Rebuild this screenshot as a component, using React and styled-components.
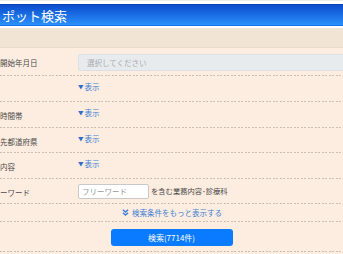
import React from "react";
import styled, { createGlobalStyle } from "styled-components";

const Global = createGlobalStyle`
  html, body { margin: 0; padding: 0; background: #ffffff; }
  body { font-family: "Noto Sans CJK JP", "Noto Sans", sans-serif; }
`

const rows = [
    { label: '開始年月日', kind: 'select', h: 28 },
    { label: '', kind: 'toggle', h: 26 },
    { label: '時間帯', kind: 'toggle', h: 26 },
    { label: '先都道府県', kind: 'toggle', h: 25 },
    { label: '内容', kind: 'toggle', h: 26 },
    { label: 'ーワード', kind: 'keyword', h: 25 },
]

// dashed rule under each row, finer than a css dashed border
const dashRule = `
    background-image: repeating-linear-gradient(to right, #cdbfb1 0 2px, transparent 2px 3.5px);
    background-size: 100% 1px;
    background-position: left bottom;
    background-repeat: no-repeat;
`

export default function App() {
    return (
        <>
            <Global />
            <Page>
                <TopRule />
                <Header>ポット検索</Header>
                <Band />
                <Form>
                    {rows.map((row, i) => (
                        <Row key={i} $h={row.h}>
                            <Label>{row.label}</Label>
                            <Value $middle={row.kind !== 'toggle'}>
                                {row.kind === 'select' && <SelectBox>選択してください</SelectBox>}
                                {row.kind === 'toggle' && <Toggle><Tri>▼</Tri>表示</Toggle>}
                                {row.kind === 'keyword' && (
                                    <>
                                        <KeywordInput placeholder={'フリーワード'} />
                                        <Note>を含む業務内容･診療科</Note>
                                    </>
                                )}
                            </Value>
                        </Row>
                    ))}
                    <CenterRow $h={18}>
                        <MoreLink>
                            <svg width="7" height="7" viewBox="0 0 8 8">
                                <path d="M1 0.8 L4 3.4 L7 0.8 M1 4.2 L4 6.8 L7 4.2" fill="none" stroke="#3d7fd6" strokeWidth="1.6"/>
                            </svg>
                            検索条件をもっと表示する
                        </MoreLink>
                    </CenterRow>
                    <CenterRow $h={30}>
                        <SearchButton>検索(7714件)</SearchButton>
                    </CenterRow>
                </Form>
            </Page>
        </>
    )
}

const Page = styled.div`
    width: 343px;
    height: 254px;
    overflow: hidden;
    background: #fdede0;
`

const TopRule = styled.div`
    height: 4px;
    background: #ffffff;
    border-top: 1px solid #ececec;
    box-sizing: border-box;
`

const Header = styled.div`
    height: 22px;
    box-sizing: border-box;
    padding-left: 2px;
    display: flex;
    align-items: center;
    color: #ffffff;
    font-size: 13px;
    background: linear-gradient(#0c4dcc, #2a90fb);
    border-bottom: 1px solid #1a6ee6;
    border-top: 1px solid #0a44b8;
`

const Band = styled.div`
    height: 19px;
    background: #f2e4d5;
    border-top: 2px solid #ffffff;
    border-bottom: 1px solid #eadbcb;
`

const Form = styled.div`
    display: flex;
    flex-direction: column;
`

const Row = styled.div`
    display: grid;
    grid-template-columns: 78px 1fr;
    height: ${p => p.$h}px;
    box-sizing: border-box;
    padding-bottom: 1px;
    ${dashRule}
`

const Label = styled.div`
    display: flex;
    align-items: center;
    font-size: 7.5px;
    color: #4a4a4a;
    white-space: nowrap;
    padding-top: 2px;
`

const Value = styled.div`
    display: flex;
    align-items: ${p => p.$middle ? 'center' : 'flex-start'};
    padding-top: ${p => p.$middle ? '0' : '5px'};
    gap: 2px;
`

const SelectBox = styled.div`
    flex: 1;
    height: 17px;
    margin-top: 1px;
    box-sizing: border-box;
    background: #e8ebee;
    border: 1px solid #dcdfe3;
    border-right: none;
    border-radius: 3px 0 0 3px;
    padding-left: 8px;
    display: flex;
    align-items: center;
    font-size: 7.5px;
    color: #a9acb0;
`

const Toggle = styled.span`
    font-size: 7.5px;
    color: #3d7fd6;
    display: flex;
    align-items: center;
`

const Tri = styled.span`
    font-size: 5.5px;
    margin-right: 1px;
    color: #2f6fcc;
`

const KeywordInput = styled.input`
    width: 71px;
    height: 15px;
    box-sizing: border-box;
    border: 1px solid #c9c9c9;
    border-radius: 2px;
    background: #ffffff;
    padding: 0 3px;
    font-family: inherit;
    font-size: 7.5px;
    margin-top: 1px;
    &::placeholder { color: #9a9a9a; }
`

const Note = styled.span`
    font-size: 7.3px;
    color: #4a4a4a;
`

const CenterRow = styled.div`
    height: ${p => p.$h}px;
    box-sizing: border-box;
    padding-bottom: 1px;
    ${dashRule}
    display: flex;
    align-items: center;
    justify-content: center;
`

const MoreLink = styled.span`
    display: flex;
    align-items: center;
    gap: 3px;
    font-size: 7.5px;
    color: #3d7fd6;
    margin-left: 1px;
`

const SearchButton = styled.button`
    width: 122px;
    height: 17px;
    margin-top: 1px;
    border: none;
    border-radius: 3px;
    background: #0a7bfe;
    color: #ffffff;
    font-family: inherit;
    font-size: 8px;
    padding: 0;
`
